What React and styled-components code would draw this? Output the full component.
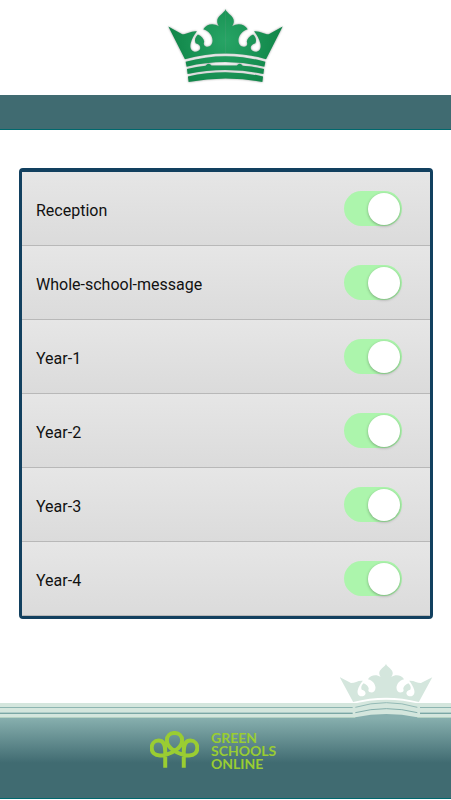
import React, { useState } from "react";
import styled, { createGlobalStyle } from "styled-components";

const groups = [
  "Reception",
  "Whole-school-message",
  "Year-1",
  "Year-2",
  "Year-3",
  "Year-4",
];

// left half of the crest, the right half is the same shape mirrored
const HALF_CROWN =
  "M196.5 26C190 40 171 46 171 62C171 68 173 72 176 77C160 66 138 70 129 86C146 90 157 106 157 120C157 133 148 141 137 138C131 136 129 130 132 124C131 114 123 106 113 102C105 109 102 119 106 128C115 130 121 136 120 143C119 151 108 155 101 153C91 150 89 141 91 130C94 116 101 104 110 92C92 90 82 101 66 101L24 78L74 176Q135 159 196.5 159Z";

const CrownTop = ({ fill }) => (
  <g fill={fill}>
    <path d={HALF_CROWN} />
    <path d={HALF_CROWN} transform="translate(392 0) scale(-1 1)" />
  </g>
);

const App = () => {
  const [enabled, setEnabled] = useState(groups);

  const toggle = (name) => {
    setEnabled(
      enabled.includes(name)
        ? enabled.filter((item) => item !== name)
        : [...enabled, name]
    );
  };

  return (
    <Page>
      <GlobalStyle />
      <Header>
        <HeaderCrown viewBox="20 20 352 230" role="img" aria-label="School crest">
          <defs>
            <radialGradient id="crown" gradientUnits="userSpaceOnUse" cx="196" cy="120" r="190">
              <stop offset="0" stopColor="#27a465" />
              <stop offset="1" stopColor="#0d8245" />
            </radialGradient>
          </defs>
          <CrownTop fill="url(#crown)" />
          <g fill="url(#crown)">
            <path d="M76 184Q196 150 316 184L313 199Q196 171 79 199Z" />
            <path d="M80 206Q110 198 136 196Q145 185 154 195H230Q239 185 248 196Q280 198 312 206L310 221Q196 196 82 221Z" />
            <path d="M83 228Q196 203 309 228L307 245Q196 223 85 245Z" />
          </g>
        </HeaderCrown>
      </Header>
      <Bar />
      <Main>
        <List>
          {groups.map((name) => (
            <Row key={name}>
              <Name>{name}</Name>
              <Switch
                type="checkbox"
                role="switch"
                checked={enabled.includes(name)}
                onChange={() => toggle(name)}
              />
            </Row>
          ))}
        </List>
      </Main>
      <FooterCrown viewBox="30 27 279 165" aria-hidden="true">
        <g transform="translate(9.6 7.2) scale(0.808 0.76)">
          <CrownTop fill="#d4e6dd" />
        </g>
        <path d="M68 147Q169 121 270 147V184H68Z" fill="#d4e6dd" />
        <path d="M76 190V187Q169 167 262 187V190Z" fill="#87afae" />
        <g fill="none" strokeWidth="3">
          <path d="M76 157Q169 129 262 157" stroke="#94bab6" />
          <path d="M76 173Q169 149 262 173" stroke="#84aeab" />
        </g>
      </FooterCrown>
      <Stripes />
      <Footer>
        <Brand href="#">
          <Trees viewBox="0 0 148 110" aria-hidden="true">
            <path d="M46 110V60C46 42 42 28 26 28C13 28 5 38 5 50C5 64 14 73 30 73C62 73 97 50 97 27C97 14 87 5 74 5C61 5 51 14 51 27C51 50 86 73 118 73C134 73 143 64 143 50C143 38 135 28 122 28C106 28 102 42 102 60V110" />
          </Trees>
          <BrandName>GREEN SCHOOLS ONLINE</BrandName>
        </Brand>
      </Footer>
    </Page>
  );
};

export default App;

const GlobalStyle = createGlobalStyle`
* {
    box-sizing: border-box;
}
body {
    margin: 0;
    background-color: white;
    font-family: Roboto, "Liberation Sans", sans-serif;
}
`;

const Page = styled.div`
min-height: 100vh;
display: flex;
flex-direction: column;
padding-bottom: 1px;
`;

const Header = styled.header`
height: 95px;
display: flex;
justify-content: center;
padding-top: 7px;
`;

const HeaderCrown = styled.svg`
width: 117px;
height: 77px;
filter: drop-shadow(0 0 1px rgba(0, 0, 0, 0.4));
`;

const Bar = styled.div`
height: 35px;
background-color: #406b71;
border-bottom: 1px solid #00686d;
`;

const Main = styled.main`
padding: 38px 18px 38px 19px;
`;

const List = styled.div`
border: 3px solid #12405f;
border-top-width: 4px;
border-radius: 4px;
overflow: hidden;
`;

const Row = styled.label`
height: 74px;
display: flex;
align-items: center;
justify-content: space-between;
padding: 0 28px 0 14px;
background-image: linear-gradient(#e6e6e6, #dbdbdb);
border-bottom: 1px solid #b8b8b8;
cursor: pointer;
`;

const Name = styled.span`
padding-top: 4px;
font-size: 16px;
color: #111;
`;

const Switch = styled.input`
appearance: none;
width: 58px;
height: 35px;
margin: 0;
padding: 2px;
display: flex;
justify-content: flex-start;
border-radius: 18px;
background-color: #c4c4c4;
cursor: pointer;

&::before {
    content: "";
    width: 32px;
    height: 32px;
    border-radius: 50%;
    background-color: white;
    box-shadow: 0 1px 3px rgba(0, 0, 0, 0.3);
}
&:checked {
    justify-content: flex-end;
    background-color: #acf5ac;
}
`;

// sits over the stripes, its base arcs continue their lines
const FooterCrown = styled.svg`
position: relative;
z-index: 1;
width: 93px;
height: 55px;
margin: auto 18px -16px auto;
`;

const Stripes = styled.div`
height: 15px;
background-image: linear-gradient(
    #d4e6dd 4px,
    #8db5b1 4px 5px,
    #d4e6dd 5px 9px,
    #b0cdc8 9px 10px,
    #7ba7a5 10px 11px,
    #d4e6dd 11px 14px,
    #b4d2c4 14px
);
`;

const Footer = styled.footer`
height: 81px;
display: flex;
justify-content: center;
padding: 13px 24px 0 0;
background-image: linear-gradient(#87afae, #406b71 45px);
border-bottom: 1px solid #00686d;
`;

const Brand = styled.a`
display: flex;
align-items: flex-start;
gap: 12px;
color: #9acd32;
text-decoration: none;
`;

const Trees = styled.svg`
width: 49px;
height: 37px;
fill: none;
stroke: currentColor;
stroke-width: 12;
`;

const BrandName = styled.span`
width: 66px;
font-family: Lato, sans-serif;
font-size: 14px;
font-weight: 700;
line-height: 13px;
`;
